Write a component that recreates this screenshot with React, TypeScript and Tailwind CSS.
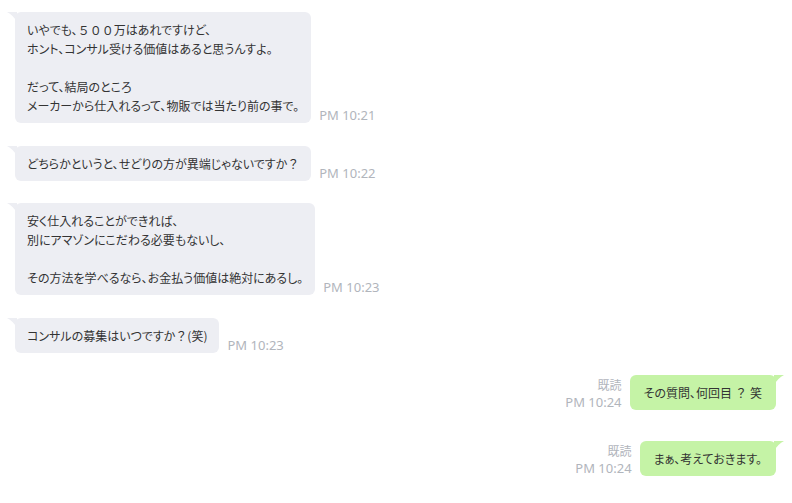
import type { ReactNode } from "react";

type Msg = {
  side: "left" | "right";
  lines: string[];
  time: string;
  gap: string;
};

const messages: Msg[] = [
  {
    side: "left",
    lines: [
      "いやでも、５００万はあれですけど、",
      "ホント、コンサル受ける価値はあると思うんすよ。",
      "",
      "だって、結局のところ",
      "メーカーから仕入れるって、物販では当たり前の事で。",
    ],
    time: "PM 10:21",
    gap: "mt-0",
  },
  {
    side: "left",
    lines: ["どちらかというと、せどりの方が異端じゃないですか？"],
    time: "PM 10:22",
    gap: "mt-[23px]",
  },
  {
    side: "left",
    lines: [
      "安く仕入れることができれば、",
      "別にアマゾンにこだわる必要もないし、",
      "",
      "その方法を学べるなら、お金払う価値は絶対にあるし。",
    ],
    time: "PM 10:23",
    gap: "mt-[22px]",
  },
  {
    side: "left",
    lines: ["コンサルの募集はいつですか？(笑)"],
    time: "PM 10:23",
    gap: "mt-[23px]",
  },
  {
    side: "right",
    lines: ["その質問、何回目？笑"],
    time: "PM 10:24",
    gap: "mt-[22px]",
  },
  {
    side: "right",
    lines: ["まぁ、考えておきます。"],
    time: "PM 10:24",
    gap: "mt-[31px]",
  },
];

const jp = "font-['Noto_Sans_CJK_JP',sans-serif]";
const meta = "font-['Noto_Sans','Noto_Sans_CJK_JP',sans-serif] text-[13px] text-[#b1b5bc]";

// full-width digits and ？ keep their full width, the rest is set proportional
function Line({ text, wide }: { text: string; wide?: boolean }) {
  if (!text) return <div>{"\u00a0"}</div>;
  const parts = text.split(/([０-９？]+)/);
  return (
    <div className="whitespace-nowrap">
      {parts.map((p, i) =>
        /^[０-９？]+$/.test(p) ? (
          <span key={i} className={`[font-feature-settings:normal] ${wide ? "mx-[3px]" : ""}`}>
            {p}
          </span>
        ) : (
          <span key={i}>{p}</span>
        ),
      )}
    </div>
  );
}

function Bubble({ side, children }: { side: "left" | "right"; children: ReactNode }) {
  const left = side === "left";
  const fill = left ? "#edeef3" : "#c5f3a6";
  return (
    <div
      className={`relative rounded-md py-2 text-[12px] leading-[19px] text-[#333] ${jp} [font-feature-settings:'palt'] ${
        left ? "bg-[#edeef3] px-3" : "bg-[#c5f3a6] px-[14px]"
      }`}
    >
      <svg
        width="10"
        height="10"
        viewBox="0 0 10 10"
        className={`absolute top-0 ${left ? "-left-2" : "-right-2 -scale-x-100"}`}
      >
        <path d="M0 0 H10 V10 Q6 3 0 0 Z" fill={fill} />
      </svg>
      {children}
    </div>
  );
}

export default function App() {
  return (
    <div className="w-[792px] h-[503px] bg-white pl-[15px] pr-[16px] pt-3 overflow-hidden">
      {messages.map((m, i) =>
        m.side === "left" ? (
          <div key={i} className={`flex items-end gap-2 ${m.gap}`}>
            <Bubble side="left">
              {m.lines.map((l, j) => (
                <Line key={j} text={l} />
              ))}
            </Bubble>
            <span className={`${meta} leading-4 whitespace-nowrap`}>{m.time}</span>
          </div>
        ) : (
          <div key={i} className={`flex items-end justify-end gap-2 ${m.gap}`}>
            <div className={`${meta} text-right`}>
              <div className={`${jp} text-[12px] leading-[18px]`}>既読</div>
              <div className="leading-4 whitespace-nowrap">{m.time}</div>
            </div>
            <Bubble side="right">
              {m.lines.map((l, j) => (
                <Line key={j} text={l} wide />
              ))}
            </Bubble>
          </div>
        ),
      )}
    </div>
  );
}
